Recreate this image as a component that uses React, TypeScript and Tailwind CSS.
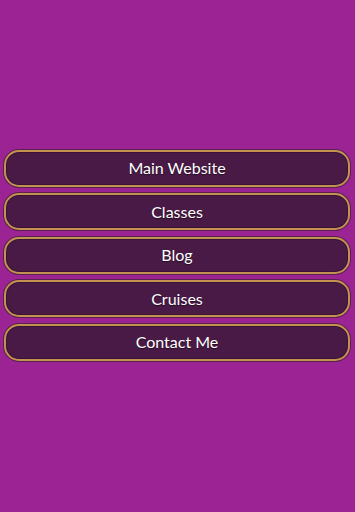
const links = ["Main Website", "Classes", "Blog", "Cruises", "Contact Me"];

export default function App() {
  return (
    <div
      className="flex h-[512px] w-full flex-col justify-center bg-[#9b2394] pl-[4px] pr-[5px]"
      style={{ fontFamily: "Lato, 'Liberation Sans', sans-serif" }}
    >
      <div className="flex flex-col gap-[6.5px] pb-[2px]">
        {links.map((label) => (
          <a
            key={label}
            href="#"
            className="flex h-[37px] items-center justify-center rounded-[15px] border-2 border-[#c39250] bg-[#491a45] text-[16px] text-white shadow-[0_0_0_1px_#5a2050,inset_0_0_0_1px_#3a1236] [text-shadow:0_1px_1px_rgba(0,0,0,0.5)]"
          >
            {label}
          </a>
        ))}
      </div>
    </div>
  );
}
